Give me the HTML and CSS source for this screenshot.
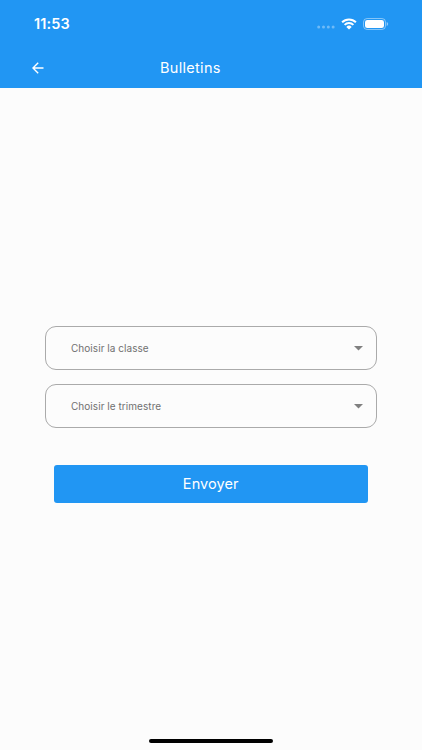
FILE: index.html
```html
<!DOCTYPE html>
<html lang="fr">
<head>
    <meta charset="UTF-8">
    <meta name="viewport" content="width=device-width, initial-scale=1.0">
    <title>Bulletins</title>
    <link rel="stylesheet" href="styles.css">
</head>
<body>

<header class="header">
    <div class="status-bar">
        <span class="time">11:53</span>
        <div class="status-icons">
            <svg class="signal" width="18" height="4" viewBox="0 0 18 4">
                <circle cx="1.7" cy="2" r="1.5"/>
                <circle cx="6.5" cy="2" r="1.5"/>
                <circle cx="11.3" cy="2" r="1.5"/>
                <circle cx="16.1" cy="2" r="1.5"/>
            </svg>
            <svg class="wifi" width="16" height="12" viewBox="0 0 16 12">
                <path d="M1.1 4.3a9.8 9.8 0 0 1 13.8 0M3.6 6.9a6.3 6.3 0 0 1 8.8 0"/>
                <path class="wifi-dot" d="M5.3 8.9a3.9 3.9 0 0 1 5.4 0L8 11.6z"/>
            </svg>
            <svg class="battery" width="26" height="12" viewBox="0 0 26 12">
                <rect class="battery-case" x="0.5" y="0.5" width="22" height="11" rx="3.6"/>
                <rect x="2" y="2" width="19" height="8" rx="2.3"/>
                <path class="battery-tip" d="M23.7 4c2 .8 2 3.2 0 4z"/>
            </svg>
        </div>
    </div>
    <div class="app-bar">
        <a class="back" href="#" aria-label="Retour">
            <svg width="12" height="12" viewBox="0 0 12 12">
                <path d="M11.5 6H1M6.2 .8L1 6l5.2 5.2"/>
            </svg>
        </a>
        <h1 class="title">Bulletins</h1>
    </div>
</header>

<main class="content">
    <button class="dropdown" type="button">
        <span>Choisir la classe</span>
        <svg width="9" height="5" viewBox="0 0 9 5"><path d="M0 0h9L4.5 4.6z"/></svg>
    </button>
    <button class="dropdown" type="button">
        <span>Choisir le trimestre</span>
        <svg width="9" height="5" viewBox="0 0 9 5"><path d="M0 0h9L4.5 4.6z"/></svg>
    </button>
    <button class="submit" type="button">Envoyer</button>
</main>

<footer class="footer">
    <div class="home-indicator"></div>
</footer>

</body>
</html>
```

FILE: styles.css
```css
* {
    box-sizing: border-box;
}
body {
    margin: 0;
    height: 750px;
    display: flex;
    flex-direction: column;
    overflow: hidden;
    font-family: Inter, sans-serif;
    background-color: #fcfcfc;
}
svg {
    display: block;
}
button {
    font-family: inherit;
    margin: 0;
}
.header {
    height: 88px;
    background-color: #2196f3;
    color: #fff;
}
.status-bar {
    height: 47px;
    padding: 0 33px 0 34px;
    display: flex;
    align-items: center;
    justify-content: space-between;
}
.time {
    font-size: 14.5px;
    font-weight: 600;
    line-height: 18px;
    letter-spacing: 0.1px;
}
.status-icons {
    display: flex;
    align-items: center;
    gap: 6px;
    fill: #fff;
}
.signal {
    margin-top: 7px;
    opacity: 0.35;
}
.wifi {
    fill: none;
    stroke: #fff;
    stroke-width: 2;
}
.wifi-dot {
    fill: #fff;
    stroke: none;
}
.battery-case {
    fill: none;
    stroke: #fff;
    stroke-opacity: 0.45;
}
.battery-tip {
    fill-opacity: 0.5;
}
.app-bar {
    height: 41px;
    padding-left: 32px;
    display: flex;
    align-items: center;
}
.back {
    width: 128px;
}
.back svg {
    fill: none;
    stroke: #fff;
    stroke-width: 1.4;
}
.title {
    margin: 0;
    font-size: 14.5px;
    font-weight: 400;
    line-height: 18px;
    letter-spacing: 0.3px;
}
.content {
    flex: 1;
    padding: 238px 45px 0;
    display: flex;
    flex-direction: column;
}
.dropdown {
    height: 44px;
    margin-bottom: 14px;
    padding: 0 13px 1px 25px;
    display: flex;
    align-items: center;
    justify-content: space-between;
    background: none;
    border: 1px solid #aaa;
    border-radius: 11px;
    color: #707070;
    font-size: 10px;
    letter-spacing: 0.05px;
}
.dropdown svg {
    margin-top: 1px;
    fill: #808080;
}
.submit {
    height: 37.5px;
    margin: 23px 9px 0 8.5px;
    padding: 0;
    border: none;
    border-radius: 3px;
    background-color: #2196f3;
    color: #fff;
    font-size: 14.5px;
    letter-spacing: 0.1px;
}
.footer {
    height: 11px;
    display: flex;
    justify-content: center;
}
.home-indicator {
    width: 124px;
    height: 4px;
    border-radius: 2px;
    background-color: #000;
}
```
